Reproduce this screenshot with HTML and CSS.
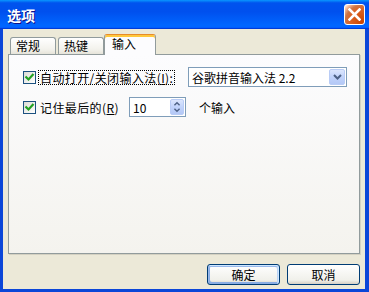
FILE: index.html
```html
<!DOCTYPE html>
<html lang="zh-CN">
<head>
    <meta charset="UTF-8">
    <title>选项</title>
    <link rel="stylesheet" href="styles.css">
</head>
<body>
    <div class="window">
        <div class="titlebar">
            <span class="title">选项</span>
            <button class="close" aria-label="关闭">
                <svg width="13" height="13" viewBox="0 0 13 13">
                    <path d="M1.5 1.5 L11.5 11.5 M11.5 1.5 L1.5 11.5" stroke="#fff" stroke-width="2.6" stroke-linecap="square"/>
                </svg>
            </button>
        </div>
        <div class="client">
            <div class="tabs">
                <div class="tab">常规</div>
                <div class="tab">热键</div>
                <div class="tab active">输入</div>
            </div>
            <div class="panel">
                <div class="row">
                    <label class="check check-ime">
                        <span class="box">
                            <svg width="11" height="11" viewBox="0 0 11 11">
                                <path d="M1.5 4.5 L4.5 7.5 L9.5 2" fill="none" stroke="#21A121" stroke-width="2.2"/>
                            </svg>
                        </span>
                        <span class="caption focus">自动打开/关闭输入法(<u>I</u>):</span>
                    </label>
                    <div class="combo">
                        <span class="field-text">谷歌拼音输入法 2.2</span>
                        <span class="combo-btn">
                            <svg width="9" height="6" viewBox="0 0 9 6">
                                <path d="M1 1 L4.5 4.5 L8 1" fill="none" stroke="#4D6185" stroke-width="2"/>
                            </svg>
                        </span>
                    </div>
                </div>
                <div class="row row-last">
                    <label class="check check-last">
                        <span class="box">
                            <svg width="11" height="11" viewBox="0 0 11 11">
                                <path d="M1.5 4.5 L4.5 7.5 L9.5 2" fill="none" stroke="#21A121" stroke-width="2.2"/>
                            </svg>
                        </span>
                        <span class="caption">记住最后的(<u>R</u>)</span>
                    </label>
                    <div class="spin">
                        <span class="field-text">10</span>
                        <span class="spin-btn">
                            <svg width="14" height="16" viewBox="0 0 14 16">
                                <path d="M4 6 L7 3 L10 6 M4 10 L7 13 L10 10" fill="none" stroke="#4D6185" stroke-width="1.6"/>
                            </svg>
                        </span>
                    </div>
                    <span class="suffix">个输入</span>
                </div>
            </div>
            <div class="buttons">
                <button class="btn default">确定</button>
                <button class="btn">取消</button>
            </div>
        </div>
    </div>
</body>
</html>
```

FILE: styles.css
```css
:root {
    --frame: #0B46D8;
    --dialog: #ECE9D8;
    --tab-border: #919B9C;
    --field-border: #7F9DB9;
}

* {
    box-sizing: border-box;
}

body {
    margin: 0;
    font-family: "Noto Sans CJK SC", "Noto Sans", sans-serif;
    font-size: 12px;
    color: #000;
    background: #fff;
}

.window {
    width: 369px;
    height: 292px;
    display: flex;
    flex-direction: column;
    background: var(--frame);
}

.titlebar {
    height: 29px;
    flex: none;
    display: flex;
    align-items: center;
    padding: 0 4px 0 7px;
    background: linear-gradient(#0997FF 0, #0053EE 10%, #0050EE 40%, #0066FF 86%, #0066FF 92%, #005BFF 95%, #003DD7 97%, #003DD7);
}

.title {
    color: #fff;
    font-weight: bold;
    font-size: 14px;
    text-shadow: 1px 1px #0F1089;
}

.close {
    margin-left: auto;
    width: 21px;
    height: 21px;
    padding: 0;
    display: flex;
    align-items: center;
    justify-content: center;
    border: 1px solid #fff;
    border-radius: 3px;
    background: radial-gradient(circle at 90% 90%, #CC4600 0, #DC6527 55%, #CD7546 70%, #FFCCB2 90%, #fff 100%);
}

.client {
    flex: 1;
    margin: 0 4px 3px 3px;
    padding: 5px 5px 0 5px;
    display: flex;
    flex-direction: column;
    background: var(--dialog);
}

.tabs {
    height: 20px;
    display: flex;
    align-items: flex-end;
    padding-left: 2px;
    position: relative;
    z-index: 1;
}

.tab {
    width: 46px;
    height: 17px;
    padding-left: 5px;
    line-height: 16px;
    border: 1px solid var(--tab-border);
    border-bottom: none;
    border-radius: 3px 3px 0 0;
    background: linear-gradient(#fff, #F3F2EC 70%, #E6E4DA);
}

.tab:first-child {
    margin-right: 2px;
}

.tab.active {
    width: 52px;
    height: 21px;
    margin-bottom: -1px;
    padding-left: 7px;
    line-height: 17px;
    border-top: 1px solid #E68B2C;
    box-shadow: inset 0 2px #FFC83C;
    background: #FCFCFE;
}

.panel {
    height: 200px;
    padding: 12px 0 0 14px;
    border: 1px solid var(--tab-border);
    box-shadow: 1px 1px 0 #D4D1C2;
    background: linear-gradient(#FCFCFE, #F4F3EE);
}

.row {
    height: 20px;
    display: flex;
    align-items: center;
}

.row-last {
    margin-top: 10px;
}

.check {
    display: flex;
    align-items: center;
}

.check-ime {
    width: 165px;
}

.check-last {
    width: 106px;
}

.box {
    width: 13px;
    height: 13px;
    flex: none;
    display: flex;
    align-items: center;
    justify-content: center;
    border: 1px solid #1C5180;
    background: linear-gradient(135deg, #DCDBD5, #fff);
}

.caption {
    margin-left: 3px;
    padding: 0 1px;
    line-height: 13px;
    letter-spacing: 0.4px;
    white-space: nowrap;
}

.focus {
    outline: 1px dotted #000;
}

.combo,
.spin {
    height: 20px;
    display: flex;
    align-items: center;
    padding-left: 3px;
    border: 1px solid var(--field-border);
    background: #fff;
}

.combo {
    width: 159px;
}

.spin {
    width: 57px;
}

.field-text {
    white-space: nowrap;
}

.combo-btn,
.spin-btn {
    margin: 0 1px 0 auto;
    height: 16px;
    display: flex;
    align-items: center;
    justify-content: center;
    border: 1px solid #B9CCF6;
    border-radius: 2px;
    background: linear-gradient(#DCE6FD, #C1D3FB 50%, #B4C8F6);
}

.combo-btn {
    width: 16px;
}

.spin-btn {
    width: 14px;
}

.suffix {
    margin-left: 13px;
}

.buttons {
    margin-top: 10px;
    display: flex;
    justify-content: flex-end;
    gap: 7px;
}

.btn {
    width: 73px;
    height: 21px;
    padding: 0;
    font: inherit;
    color: #000;
    border: 1px solid #003C74;
    border-radius: 3px;
    background: linear-gradient(#fff, #F0F0EA 80%, #D6D0C5);
}

.btn.default {
    box-shadow: inset -1px 1px #CEE7FF, inset 1px 2px #98B8EA, inset -2px 2px #BCD4F6, inset 1px -1px #89ADE4, inset 2px -2px #89ADE4;
}
```
